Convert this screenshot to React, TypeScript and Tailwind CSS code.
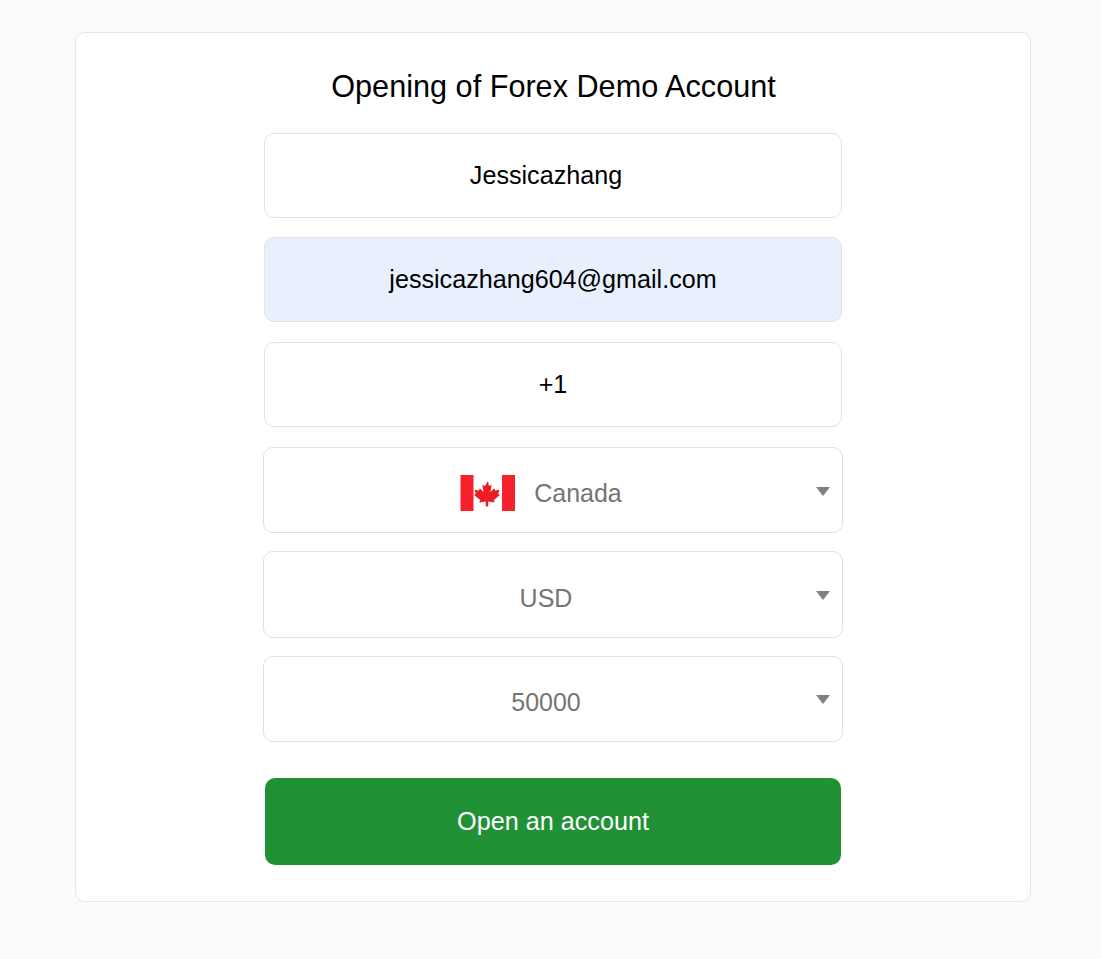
import React from "react";

const CanadaFlag: React.FC = () => (
  <svg width="56" height="36" viewBox="0 0 56 36" className="mb-[2px] shrink-0 blur-[0.4px]">
    <rect x="0.5" y="0" width="13" height="36" fill="#f5222d" />
    <rect x="42" y="0" width="13" height="36" fill="#f5222d" />
    <path
      d="M28 6l-3 5-2.6-1.2 1.2 7.4-3.8-4-.9 2.2-4.4-.7 1.3 4.4-1.8.9 6.2 5-.9 2.6 6.4-1 .1 4.9h2.4l.1-4.9 6.4 1-.9-2.6 6.2-5-1.8-.9 1.3-4.4-4.4.7-.9-2.2-3.8 4 1.2-7.4-2.6 1.2z"
      fill="#ea1c24"
    />
  </svg>
);

const fieldBase =
  "block w-[578px] h-[85px] mx-auto rounded-[10px] border border-[#e3e3e3] text-center text-[25.15px] text-black outline-none font-['Liberation_Sans',Arial,sans-serif]";

const SelectBox: React.FC<{ boxClass: string; arrowClass: string; children: React.ReactNode }> = ({
  boxClass,
  arrowClass,
  children,
}) => (
  <div
    className={`relative flex w-[580px] mx-auto items-center justify-center rounded-[10px] border border-[#e0e0e0] bg-white pr-[14px] text-[25px] text-[#757575] ${boxClass}`}
  >
    {children}
    <svg width="16" height="9" viewBox="0 0 16 9" className={`absolute right-[11px] ${arrowClass}`}>
      <path d="M1 0H15L8 9Z" fill="#808080" />
    </svg>
  </div>
);

export default function App() {
  return (
    <div className="min-h-[959px] bg-[#fbfbfb] pt-[32px] font-['Liberation_Sans',Arial,sans-serif]">
      <div className="ml-[75px] h-[870px] w-[956px] rounded-[10px] border border-[#e6e6e6] bg-white pt-[33px]">
        <h1 className="pl-[1px] text-center text-[30.65px] leading-[40px] font-normal text-black">
          Opening of Forex Demo Account
        </h1>
        <div className="mt-[27px] flex flex-col">
          <input readOnly value="Jessicazhang" className={`${fieldBase} bg-white pr-[14px]`} />
          <input readOnly value="jessicazhang604@gmail.com" className={`${fieldBase} mt-[19px] bg-[#e8f0fe]`} />
          <input readOnly value="+1" className={`${fieldBase} mt-[20px] bg-white`} />
          <div className="mt-[20px]">
            <SelectBox boxClass="h-[86px] pt-[8px]" arrowClass="top-[39px]">
              <div className="mr-[10px] flex items-center">
                <CanadaFlag />
                <span className="ml-[18px]">Canada</span>
              </div>
            </SelectBox>
          </div>
          <div className="mt-[18px]">
            <SelectBox boxClass="h-[87px] pt-[9px]" arrowClass="top-[39px]">
              USD
            </SelectBox>
          </div>
          <div className="mt-[18px]">
            <SelectBox boxClass="h-[86px] pt-[8px]" arrowClass="top-[38px]">
              50000
            </SelectBox>
          </div>
          <button className="mx-auto mt-[36px] h-[87px] w-[576px] rounded-[10px] bg-[#209135] text-[25.2px] text-white">
            Open an account
          </button>
        </div>
      </div>
    </div>
  );
}
